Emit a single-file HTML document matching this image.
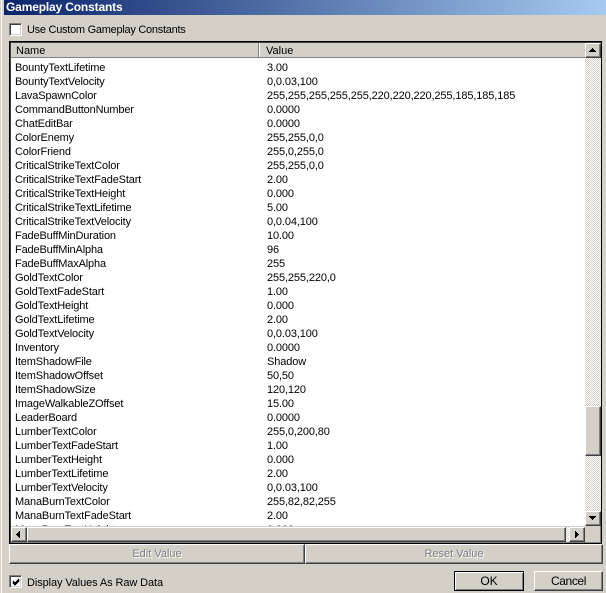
<!DOCTYPE html>
<html><head><meta charset="utf-8"><style>
html,body{margin:0;padding:0;width:606px;height:593px;overflow:hidden;background:#d4d0c8}
body{position:relative;font-family:"Liberation Sans",sans-serif;font-size:11px;color:#000}
div{position:absolute;box-sizing:border-box;white-space:nowrap}
.title{left:4px;top:0;width:602px;height:15px;background:linear-gradient(90deg,#0a246a,#a6caf0);color:#fff;font-weight:bold;font-size:12px;line-height:14px;padding-left:2px;letter-spacing:-.16px}
.btn{background:#d4d0c8;border-style:solid;border-width:1px;border-color:#fff #404040 #404040 #fff;box-shadow:inset -1px -1px 0 #808080}
.dith{background:repeating-conic-gradient(#fff 0 25%,#d4d0c8 0 50%) 0 0/2px 2px}
.cb{width:13px;height:13px;background:#fff;border-style:solid;border-width:1px;border-color:#808080 #fff #fff #808080;box-shadow:inset 1px 1px 0 #404040,inset -1px -1px 0 #d4d0c8}
.rows{left:11px;top:58px;width:574px;height:468px;background:#fff;overflow:hidden}
.r{left:0;width:574px;height:14px;line-height:14px}
.r span{position:absolute;top:1px;left:4px;letter-spacing:-.15px}
.r span+span{left:256px;letter-spacing:-.12px}
.lbl{line-height:14px}
.dis{color:#808080;text-shadow:1px 1px 0 #fff;text-align:center;line-height:19px}
</style></head><body>
<div style="left:1px;top:0;width:1px;height:593px;background:#fff"></div>
<div class="title">Gameplay Constants</div>

<div class="cb" style="left:9px;top:23px"></div>
<div class="lbl" style="left:27px;top:23px;letter-spacing:-.27px">Use Custom Gameplay Constants</div>

<div style="left:9px;top:41px;width:593px;height:503px;border:1px solid #000;box-shadow:inset 1px 1px 0 #404040,inset -1px -1px 0 #808080"></div>

<div style="left:11px;top:43px;width:574px;height:15px;background:#d4d0c8;border-bottom:1px solid #808080"></div>
<div style="left:258px;top:43px;width:2px;height:14px;background:linear-gradient(90deg,#808080 50%,#fff 50%)"></div>
<div class="lbl" style="left:16px;top:44px">Name</div>
<div class="lbl" style="left:266px;top:44px">Value</div>

<div class="rows">
<div class="r" style="top:2px"><span>BountyTextLifetime</span><span>3.00</span></div>
<div class="r" style="top:16px"><span>BountyTextVelocity</span><span>0,0.03,100</span></div>
<div class="r" style="top:30px"><span>LavaSpawnColor</span><span>255,255,255,255,255,220,220,220,255,185,185,185</span></div>
<div class="r" style="top:44px"><span>CommandButtonNumber</span><span>0.0000</span></div>
<div class="r" style="top:58px"><span>ChatEditBar</span><span>0.0000</span></div>
<div class="r" style="top:72px"><span>ColorEnemy</span><span>255,255,0,0</span></div>
<div class="r" style="top:86px"><span>ColorFriend</span><span>255,0,255,0</span></div>
<div class="r" style="top:100px"><span>CriticalStrikeTextColor</span><span>255,255,0,0</span></div>
<div class="r" style="top:114px"><span>CriticalStrikeTextFadeStart</span><span>2.00</span></div>
<div class="r" style="top:128px"><span>CriticalStrikeTextHeight</span><span>0.000</span></div>
<div class="r" style="top:142px"><span>CriticalStrikeTextLifetime</span><span>5.00</span></div>
<div class="r" style="top:156px"><span>CriticalStrikeTextVelocity</span><span>0,0.04,100</span></div>
<div class="r" style="top:170px"><span>FadeBuffMinDuration</span><span>10.00</span></div>
<div class="r" style="top:184px"><span>FadeBuffMinAlpha</span><span>96</span></div>
<div class="r" style="top:198px"><span>FadeBuffMaxAlpha</span><span>255</span></div>
<div class="r" style="top:212px"><span>GoldTextColor</span><span>255,255,220,0</span></div>
<div class="r" style="top:226px"><span>GoldTextFadeStart</span><span>1.00</span></div>
<div class="r" style="top:240px"><span>GoldTextHeight</span><span>0.000</span></div>
<div class="r" style="top:254px"><span>GoldTextLifetime</span><span>2.00</span></div>
<div class="r" style="top:268px"><span>GoldTextVelocity</span><span>0,0.03,100</span></div>
<div class="r" style="top:282px"><span>Inventory</span><span>0.0000</span></div>
<div class="r" style="top:296px"><span>ItemShadowFile</span><span>Shadow</span></div>
<div class="r" style="top:310px"><span>ItemShadowOffset</span><span>50,50</span></div>
<div class="r" style="top:324px"><span>ItemShadowSize</span><span>120,120</span></div>
<div class="r" style="top:338px"><span>ImageWalkableZOffset</span><span>15.00</span></div>
<div class="r" style="top:352px"><span>LeaderBoard</span><span>0.0000</span></div>
<div class="r" style="top:366px"><span>LumberTextColor</span><span>255,0,200,80</span></div>
<div class="r" style="top:380px"><span>LumberTextFadeStart</span><span>1.00</span></div>
<div class="r" style="top:394px"><span>LumberTextHeight</span><span>0.000</span></div>
<div class="r" style="top:408px"><span>LumberTextLifetime</span><span>2.00</span></div>
<div class="r" style="top:422px"><span>LumberTextVelocity</span><span>0,0.03,100</span></div>
<div class="r" style="top:436px"><span>ManaBurnTextColor</span><span>255,82,82,255</span></div>
<div class="r" style="top:450px"><span>ManaBurnTextFadeStart</span><span>2.00</span></div>
<div class="r" style="top:464px"><span>ManaBurnTextHeight</span><span>0.000</span></div>
</div>

<div class="dith" style="left:585px;top:43px;width:16px;height:483px"></div>
<div class="btn" style="left:585px;top:43px;width:16px;height:15px"></div>
<svg style="position:absolute;left:589px;top:48px" width="8" height="5"><path d="M3 0h1v1h1v1h1v1h1v1H0V3h1V2h1V1h1z" fill="#000"/></svg>
<div class="btn" style="left:585px;top:406px;width:16px;height:50px"></div>
<div class="btn" style="left:585px;top:511px;width:16px;height:15px"></div>
<svg style="position:absolute;left:589px;top:516px" width="8" height="5"><path d="M0 0h7v1H6v1H5v1H4v1H3V3H2V2H1V1H0z" fill="#000"/></svg>

<div style="left:11px;top:526px;width:574px;height:1px;background:#d4d0c8"></div>
<div class="btn" style="left:11px;top:527px;width:16px;height:15px"></div>
<svg style="position:absolute;left:16px;top:531px" width="5" height="8"><path d="M4 0v7H3V6H2V5H1V4H0V3h1V2h1V1h1V0z" fill="#000"/></svg>
<div class="btn" style="left:27px;top:527px;width:539px;height:15px"></div>
<div class="dith" style="left:566px;top:527px;width:3px;height:15px"></div>
<div class="btn" style="left:569px;top:527px;width:16px;height:15px"></div>
<svg style="position:absolute;left:575px;top:531px" width="5" height="8"><path d="M0 0h1v1h1v1h1v1h1v1H3v1H2v1H1v1H0z" fill="#000"/></svg>

<div class="btn dis" style="left:9px;top:544px;width:296px;height:20px">Edit Value</div>
<div class="btn dis" style="left:305px;top:544px;width:298px;height:20px">Reset Value</div>

<div class="cb" style="left:9px;top:575px"></div>
<svg style="position:absolute;left:12px;top:578px" width="8" height="8"><path d="M1 3l2 2 4-4M1 4l2 2 4-4M1 5l2 2 4-4" stroke="#000" stroke-width="1" fill="none" shape-rendering="crispEdges"/></svg>
<div class="lbl" style="left:27px;top:576px;letter-spacing:-.1px">Display Values As Raw Data</div>

<div class="btn" style="left:454px;top:571px;width:70px;height:20px;border:1px solid #000;box-shadow:inset 1px 1px 0 #fff,inset -1px -1px 0 #808080;text-align:center;line-height:19px;font-size:12px">OK</div>
<div class="btn" style="left:534px;top:571px;width:69px;height:20px;text-align:center;line-height:19px;font-size:12px;letter-spacing:-.4px">Cancel</div>
</body></html>
